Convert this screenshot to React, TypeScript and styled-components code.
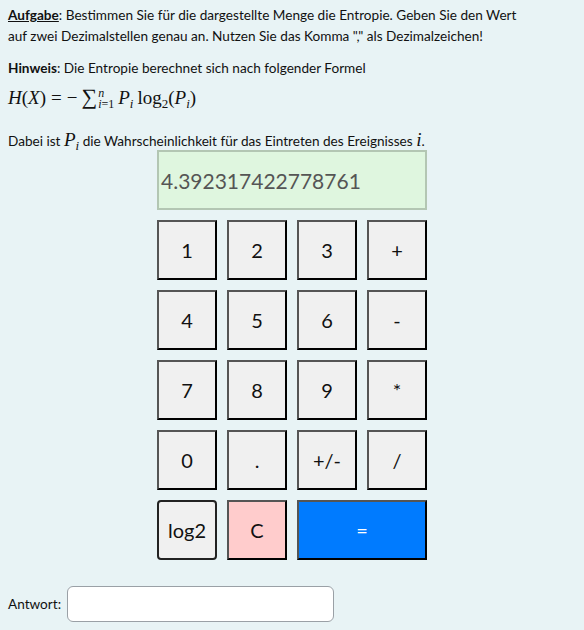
import React from "react";
import styled, { createGlobalStyle } from "styled-components";

const Global = createGlobalStyle`
  html, body { margin: 0; padding: 0; background: #e8f3f5; }
  body {
    padding: 5px 8px 0 8px;
    font-family: "Lato", "Liberation Sans", sans-serif;
    font-size: 13.6px;
    color: #111;
  }
`;

const Page = styled.div`
  display: flex;
  flex-direction: column;
`;

const Para = styled.p<{ $mt?: number; $lh?: number }>`
  margin: ${(p) => p.$mt ?? 0}px 0 0 0;
  line-height: ${(p) => p.$lh ?? 21}px;
  white-space: nowrap;
`;

const Label = styled.span<{ $u?: boolean }>`
  font-weight: 700;
  text-decoration: ${(p) => (p.$u ? "underline" : "none")};
`;

const Formula = styled.div`
  margin-top: 6px;
  height: 26px;
  font-family: "Liberation Serif", serif;
  font-size: 19px;
  line-height: 26px;
  white-space: nowrap;
`;

const InlineMath = styled.span`
  font-family: "Liberation Serif", serif;
  font-size: 19px;
  line-height: 0;
`;

const MI = styled.span`
  font-style: italic;
`;

const Sub = styled.sub`
  font-size: 13px;
  vertical-align: -4px;
  line-height: 0;
`;

const SumSign = styled.span`
  font-size: 22px;
  line-height: 0;
  margin-left: 4px;
`;

const Scripts = styled.span`
  display: inline-flex;
  flex-direction: column;
  vertical-align: 7px;
  font-size: 12px;
  line-height: 11px;
  margin: 0 4px 0 1px;
`;

const Gap = styled.span<{ $w: number }>`
  display: inline-block;
  width: ${(p) => p.$w}px;
`;

const Calc = styled.div`
  align-self: center;
  margin-top: 0;
  display: grid;
  grid-template-columns: repeat(4, 60px);
  grid-auto-rows: 60px;
  gap: 10px;
`;

const Display = styled.div`
  grid-column: 1 / span 4;
  box-sizing: border-box;
  background: #dff6df;
  border: 2px solid #b3c6b3;
  display: flex;
  align-items: center;
  padding-left: 2px;
  font-size: 21px;
  color: #555;
`;

const Key = styled.button<{ $bg?: string; $fg?: string; $span?: number; $round?: boolean }>`
  box-sizing: border-box;
  grid-column: span ${(p) => p.$span ?? 1};
  margin: 0;
  padding: 0;
  background: ${(p) => p.$bg ?? "#f0f0f0"};
  color: ${(p) => p.$fg ?? "#111"};
  border: 2px solid;
  border-color: ${(p) => (p.$round ? "#222" : "#555 #000 #000 #555")};
  border-radius: ${(p) => (p.$round ? "4px" : "0")};
  font-family: "Lato", "Liberation Sans", sans-serif;
  font-size: 20px;
  cursor: pointer;
`;

const AnswerRow = styled.div`
  margin-top: 26px;
  display: flex;
  align-items: center;
  gap: 6px;
`;

const Input = styled.input`
  box-sizing: border-box;
  width: 267px;
  height: 36px;
  border: 1px solid #9aa0a6;
  border-radius: 6px;
  background: #fff;
`;

const keys: { k: string; bg?: string; fg?: string; span?: number; round?: boolean }[] = [
  { k: "1" }, { k: "2" }, { k: "3" }, { k: "+" },
  { k: "4" }, { k: "5" }, { k: "6" }, { k: "-" },
  { k: "7" }, { k: "8" }, { k: "9" }, { k: "*" },
  { k: "0" }, { k: "." }, { k: "+/-" }, { k: "/" },
  { k: "log2", round: true }, { k: "C", bg: "#ffcccc" }, { k: "=", bg: "#007bff", fg: "#fff", span: 2 },
];

export default function App() {
  return (
    <Page>
      <Global />
      <Para>
        <Label $u>Aufgabe</Label>: Bestimmen Sie für die dargestellte Menge die Entropie. Geben Sie den Wert
        <br />
        auf zwei Dezimalstellen genau an. Nutzen Sie das Komma "," als Dezimalzeichen!
      </Para>
      <Para $mt={11}>
        <Label>Hinweis</Label>: Die Entropie berechnet sich nach folgender Formel
      </Para>
      <Formula>
        <MI>H</MI>(<MI>X</MI>)<Gap $w={5} />=<Gap $w={5} />−
        <SumSign>∑</SumSign>
        <Scripts>
          <MI>n</MI>
          <span>
            <MI>i</MI>=1
          </span>
        </Scripts>
        <MI>P</MI>
        <Sub>
          <MI>i</MI>
        </Sub>
        <Gap $w={4} />
        log<Sub>2</Sub>(<MI>P</MI>
        <Sub>
          <MI>i</MI>
        </Sub>
        )
      </Formula>
      <Para $mt={21} $lh={18}>
        Dabei ist{" "}
        <InlineMath>
          <MI>P</MI>
          <Sub>
            <MI>i</MI>
          </Sub>
        </InlineMath>{" "}
        die Wahrscheinlichkeit für das Eintreten des Ereignisses{" "}
        <InlineMath>
          <MI>i</MI>
        </InlineMath>
        .
      </Para>
      <Calc>
        <Display>4.392317422778761</Display>
        {keys.map((b) => (
          <Key key={b.k} $bg={b.bg} $fg={b.fg} $span={b.span} $round={b.round}>
            {b.k}
          </Key>
        ))}
      </Calc>
      <AnswerRow>
        <span>Antwort:</span>
        <Input type="text" />
      </AnswerRow>
    </Page>
  );
}
